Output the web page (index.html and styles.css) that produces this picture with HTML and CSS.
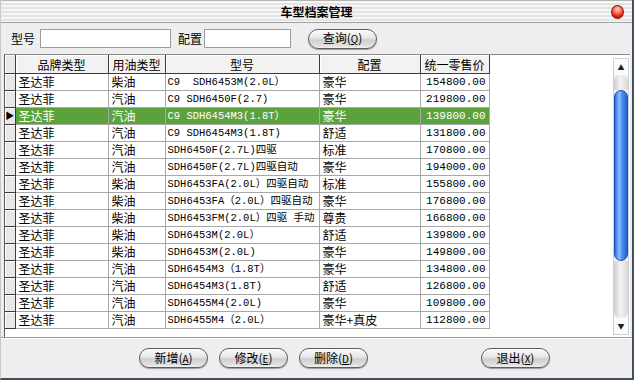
FILE: index.html
```html
<!DOCTYPE html>
<html lang="zh">
<head>
    <meta charset="UTF-8">
    <title>车型档案管理</title>
    <link rel="stylesheet" href="styles.css">
</head>
<body>
    <div class="window">
        <div class="titlebar">
            <span></span>
            <span class="title">车型档案管理</span>
            <span class="closeBtn"></span>
        </div>

        <div class="toolbar">
            <label>型号</label>
            <input class="field modelField" type="text">
            <label class="cfgLabel">配置</label>
            <input class="field cfgField" type="text">
            <button class="pill searchBtn">查询(<u>Q</u>)</button>
        </div>

        <div class="grid">
            <div class="gridBody">
                <table class="records">
                    <colgroup>
                        <col class="c0"><col class="c1"><col class="c2"><col class="c3"><col class="c4"><col class="c5">
                    </colgroup>
                    <thead>
                        <tr>
                            <th class="ind"></th>
                            <th>品牌类型</th>
                            <th>用油类型</th>
                            <th>型号</th>
                            <th>配置</th>
                            <th>统一零售价</th>
                        </tr>
                    </thead>
                    <tbody>
                        <tr><td class="ind"></td><td>圣达菲</td><td>柴油</td><td class="mono">C9&nbsp;&nbsp;SDH6453M(2.0L）</td><td>豪华</td><td class="price">154800.00</td></tr>
                        <tr><td class="ind"></td><td>圣达菲</td><td>汽油</td><td class="mono">C9 SDH6450F(2.7)</td><td>豪华</td><td class="price">219800.00</td></tr>
                        <tr class="selected"><td class="ind">&#9654;</td><td>圣达菲</td><td>汽油</td><td class="mono">C9 SDH6454M3(1.8T）</td><td>豪华</td><td class="price">139800.00</td></tr>
                        <tr><td class="ind"></td><td>圣达菲</td><td>汽油</td><td class="mono">C9 SDH6454M3(1.8T)</td><td>舒适</td><td class="price">131800.00</td></tr>
                        <tr><td class="ind"></td><td>圣达菲</td><td>汽油</td><td class="mono">SDH6450F(2.7L)四驱</td><td>标准</td><td class="price">170800.00</td></tr>
                        <tr><td class="ind"></td><td>圣达菲</td><td>汽油</td><td class="mono">SDH6450F(2.7L)四驱自动</td><td>豪华</td><td class="price">194000.00</td></tr>
                        <tr><td class="ind"></td><td>圣达菲</td><td>柴油</td><td class="mono">SDH6453FA(2.0L）四驱自动</td><td>标准</td><td class="price">155800.00</td></tr>
                        <tr><td class="ind"></td><td>圣达菲</td><td>柴油</td><td class="mono">SDH6453FA（2.0L）四驱自动</td><td>豪华</td><td class="price">176800.00</td></tr>
                        <tr><td class="ind"></td><td>圣达菲</td><td>柴油</td><td class="mono">SDH6453FM(2.0L）四驱 手动</td><td>尊贵</td><td class="price">166800.00</td></tr>
                        <tr><td class="ind"></td><td>圣达菲</td><td>柴油</td><td class="mono">SDH6453M(2.0L）</td><td>舒适</td><td class="price">139800.00</td></tr>
                        <tr><td class="ind"></td><td>圣达菲</td><td>柴油</td><td class="mono">SDH6453M(2.0L)</td><td>豪华</td><td class="price">149800.00</td></tr>
                        <tr><td class="ind"></td><td>圣达菲</td><td>汽油</td><td class="mono">SDH6454M3（1.8T）</td><td>豪华</td><td class="price">134800.00</td></tr>
                        <tr><td class="ind"></td><td>圣达菲</td><td>汽油</td><td class="mono">SDH6454M3(1.8T)</td><td>舒适</td><td class="price">126800.00</td></tr>
                        <tr><td class="ind"></td><td>圣达菲</td><td>汽油</td><td class="mono">SDH6455M4(2.0L)</td><td>豪华</td><td class="price">109800.00</td></tr>
                        <tr><td class="ind"></td><td>圣达菲</td><td>汽油</td><td class="mono">SDH6455M4（2.0L）</td><td>豪华+真皮</td><td class="price">112800.00</td></tr>
                    </tbody>
                </table>
            </div>
            <div class="scrollbar">
                <div class="arrow">&#9650;</div>
                <div class="capTop"></div>
                <div class="thumb"></div>
                <div class="capBottom"></div>
                <div class="arrow">&#9660;</div>
            </div>
        </div>

        <div class="footer">
            <button class="pill">新增(<u>A</u>)</button>
            <button class="pill">修改(<u>E</u>)</button>
            <button class="pill">删除(<u>D</u>)</button>
            <button class="pill exitBtn">退出(<u>X</u>)</button>
        </div>
    </div>
</body>
</html>
```

FILE: styles.css
```css
body {
    margin: 0;
    background-color: #ffffff;
    font-family: "Noto Sans CJK SC", "DejaVu Sans", sans-serif;
    font-size: 12px;
    color: #000000;
}

.window {
    width: 634px;
    height: 380px;
    box-sizing: border-box;
    background-color: #eeeeee;
    border-left: 1px solid #c8c8c8;
    border-right: 2px solid #3f4e5c;
    border-bottom: 2px solid #3f4e5c;
    display: flex;
    flex-direction: column;
}

/* title bar */
.titlebar {
    height: 21px;
    flex: none;
    border-top: 1px solid #b4b4b4;
    border-bottom: 1px solid #a0a0a0;
    background: repeating-linear-gradient(#f6f6f6 0px, #f6f6f6 2px, #e4e4e4 2px, #e4e4e4 4px);
    display: grid;
    grid-template-columns: 1fr auto 1fr;
    align-items: center;
}

.title {
    font-weight: bold;
    font-size: 12px;
    line-height: 20px;
}

.closeBtn {
    justify-self: end;
    width: 13px;
    height: 14px;
    margin-right: 8px;
    border-radius: 50%;
    border: 1px solid #8a1a10;
    box-sizing: border-box;
    background: radial-gradient(circle at 50% 28%, #ffd0c8 0px, #ff6a50 4px, #e0200c 7px, #a81000 10px);
}

/* search row */
.toolbar {
    height: 31px;
    flex: none;
    box-sizing: border-box;
    padding-left: 10px;
    display: flex;
    align-items: center;
}

.field {
    height: 19px;
    box-sizing: border-box;
    border: 1px solid #9c9c9c;
    background-color: #ffffff;
    padding: 0 2px;
    margin: 0;
}

.modelField {
    width: 131px;
    margin-left: 5px;
}

.cfgLabel {
    margin-left: 7px;
}

.cfgField {
    width: 87px;
    margin-left: 2px;
}

.pill {
    width: 69px;
    height: 20px;
    padding: 0;
    border: 1px solid #5c5c5c;
    border-radius: 10px;
    background: linear-gradient(#fafafa 0%, #e6e6e6 45%, #cfcfcf 55%, #dedede 85%, #f2f2f2 100%);
    box-shadow: inset 0 1px 0 #ffffff, 0 1px 1px #9a9a9a;
    font-family: "Noto Sans CJK SC", "DejaVu Sans", sans-serif;
    font-size: 12px;
    color: #000000;
    line-height: 16px;
    cursor: pointer;
}

.pill u {
    font-size: 10px;
}

.searchBtn {
    margin-left: 17px;
}

/* data grid */
.grid {
    height: 283px;
    flex: none;
    margin: 0 2px 0 3px;
    border-top: 1px solid #8a8a8a;
    border-left: 1px solid #5a5a5a;
    background-color: #ffffff;
    display: flex;
    box-sizing: border-box;
}

.gridBody {
    flex: 1;
    overflow: hidden;
}

.records {
    border-collapse: collapse;
    table-layout: fixed;
    width: 484px;
}

.c0 { width: 10px; }
.c1 { width: 93px; }
.c2 { width: 57px; }
.c3 { width: 154px; }
.c4 { width: 101px; }
.c5 { width: 69px; }

.records th {
    height: 18px;
    padding: 0;
    font-weight: normal;
    text-align: center;
    background-color: #f2f2f2;
    border-right: 1px solid #3c3c3c;
    border-bottom: 1px solid #3c3c3c;
    box-shadow: inset 1px 1px 0 #ffffff;
    white-space: nowrap;
    overflow: hidden;
}

.records td {
    height: 16px;
    padding: 0 0 0 3px;
    border-right: 1px solid #a8a8a8;
    border-bottom: 1px solid #a8a8a8;
    white-space: nowrap;
    overflow: hidden;
    line-height: 16px;
}

.records td.mono {
    padding-left: 2px;
    font-family: "Liberation Mono", "Noto Sans CJK SC", monospace;
    font-size: 10.5px;
}

.records td.price {
    text-align: right;
    padding: 0 3px 0 0;
    font-family: "Liberation Mono", monospace;
    font-size: 11px;
}

.records .ind {
    padding: 0;
    background-color: #e8e8e8;
    border-right: 1px solid #3c3c3c;
    border-bottom: 1px solid #3c3c3c;
    box-shadow: inset 1px 1px 0 #ffffff;
    color: #000000;
    font-size: 9px;
    text-align: center;
}

.selected td {
    background-color: #5ca23c;
    color: #ffffff;
}

.selected td.ind {
    background-color: #e8e8e8;
    color: #000000;
}

/* scroll bar */
.scrollbar {
    width: 14px;
    flex: none;
    margin: 3px 1px 2px 0;
    display: flex;
    flex-direction: column;
    background-color: #f4f4f4;
    border: 1px solid #d0d0d0;
}

.arrow {
    height: 16px;
    flex: none;
    font-size: 7px;
    line-height: 16px;
    text-align: center;
    color: #202020;
    background-color: #fbfbfb;
}

.capTop {
    height: 15px;
    flex: none;
    border-radius: 6px 6px 0 0;
    background: linear-gradient(90deg, #cfcfcf, #f4f4f4 45%, #d8d8d8);
}

.thumb {
    flex: 1;
    border-radius: 7px;
    border: 1px solid #1f4fb8;
    background: linear-gradient(90deg, #2a6ae0, #8cc0ff 35%, #4a8ef0 60%, #2460d0);
}

.capBottom {
    height: 57px;
    flex: none;
    border-radius: 0 0 6px 6px;
    background: linear-gradient(90deg, #cfcfcf, #f4f4f4 45%, #d8d8d8);
}

/* bottom buttons */
.footer {
    flex: 1;
    border-top: 1px solid #9a9a9a;
    box-shadow: inset 0 1px 0 #ffffff;
    padding: 10px 0 0 138px;
    display: flex;
    align-items: flex-start;
    gap: 11px;
}

.exitBtn {
    margin-left: 102px;
}
```
